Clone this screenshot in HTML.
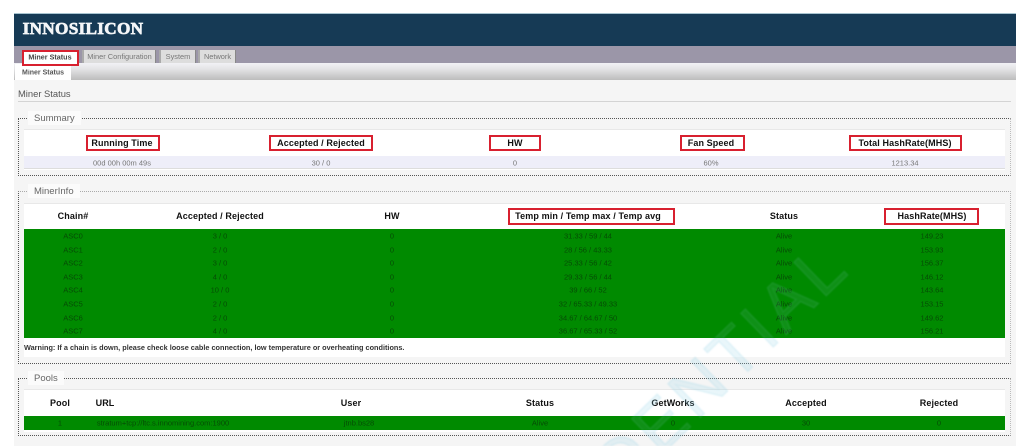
<!DOCTYPE html>
<html><head><meta charset="utf-8">
<style>
html,body{margin:0;padding:0;background:#fff;overflow:hidden;height:446px}
body{width:1024px;position:relative;font-family:"Liberation Sans",sans-serif}
.a{position:absolute}
.t{position:absolute;white-space:nowrap;transform:translate(-50%,-50%);line-height:1;filter:blur(.3px)}
.h{font:bold 9px "Liberation Sans",sans-serif;color:#111;letter-spacing:.12px}
.v{font-size:7.5px;color:#777}
.g{font-size:7.5px;color:#054c05;filter:blur(.3px)}
.r{position:absolute;border:2px solid #d8202f;box-sizing:border-box;background:#fff}
.tab{position:absolute;top:50px;height:13px;background:#ddd;border-left:2px solid #aaa;border-right:1px solid #888;box-sizing:border-box;color:#777;font-size:7.4px;line-height:14px;text-align:center;white-space:nowrap}
.fs{position:absolute;left:18px;width:993px;box-sizing:border-box;border:1px dotted #555;border-right-color:#bbb}
.lg{position:absolute;left:28px;background:#fbfbfb;color:#666;font-size:9.5px;line-height:15px;padding:0 6px;height:14px;overflow:hidden}
.w{position:absolute;left:24px;width:981px;background:#fff;border-top:1px solid #e8e8e8}
.gr{position:absolute;left:24px;width:981px;background:#008a00}
svg{overflow:hidden}
</style></head><body>
<div class="a" style="left:14px;top:13px;width:1002px;height:33px;background:#163a55;border-top:1px solid #a8c4d0;box-sizing:border-box"></div>
<div class="t" style="left:83px;top:29px;font:bold 17.2px 'Liberation Serif',serif;color:#f4f6f8;letter-spacing:.3px;-webkit-text-stroke:.7px #f4f6f8">INNOSILICON</div>
<div class="a" style="left:14px;top:46px;width:1002px;height:17px;background:#9b96a8"></div>
<div class="a" style="left:14px;top:63px;width:1002px;height:17px;background:linear-gradient(#f1f1f5,#e4e4e6 35%,#bcbcbc)"></div>
<div class="a" style="left:14px;top:80px;width:1002px;height:366px;background:#f5f5f5"></div>

<div class="a" style="left:15px;top:64px;width:56px;height:16px;background:#fff"></div>
<div class="r" style="left:22px;top:50px;width:57px;height:16px;background:#fff"></div>
<div class="t" style="left:50px;top:57px;font-size:7.2px;font-weight:bold;color:#444">Miner Status</div>
<div class="tab" style="left:82px;width:74px">Miner Configuration</div>
<div class="tab" style="left:159px;width:37px">System</div>
<div class="tab" style="left:198px;width:38px">Network</div>
<div class="t" style="left:43px;top:73px;font-size:7px;font-weight:bold;color:#555">Miner Status</div>

<div class="a" style="left:18px;top:88px;font-size:9.4px;line-height:12px;color:#555">Miner Status</div>
<div class="a" style="left:18px;top:101px;width:993px;height:1px;background:#d4d4d4"></div>

<div class="fs" style="top:118px;height:58px"></div>
<div class="lg" style="top:111px">Summary</div>
<div class="w" style="top:129px;height:40px"></div>
<div class="a" style="left:24px;top:156px;width:981px;height:13px;background:#eeeef9;border-bottom:1px solid #ddd;box-sizing:border-box"></div>
<div class="r" style="left:86px;top:135px;width:74px;height:16px"></div>
<div class="r" style="left:269px;top:135px;width:104px;height:16px"></div>
<div class="r" style="left:489px;top:135px;width:52px;height:16px"></div>
<div class="r" style="left:680px;top:135px;width:65px;height:16px"></div>
<div class="r" style="left:849px;top:135px;width:113px;height:16px"></div>
<div class="t h" style="left:122px;top:143px">Running Time</div>
<div class="t h" style="left:321px;top:143px">Accepted / Rejected</div>
<div class="t h" style="left:515px;top:143px">HW</div>
<div class="t h" style="left:711px;top:143px">Fan Speed</div>
<div class="t h" style="left:905px;top:143px">Total HashRate(MHS)</div>
<div class="t v" style="left:122px;top:163px">00d 00h 00m 49s</div>
<div class="t v" style="left:321px;top:163px">30 / 0</div>
<div class="t v" style="left:515px;top:163px">0</div>
<div class="t v" style="left:711px;top:163px">60%</div>
<div class="t v" style="left:905px;top:163px">1213.34</div>

<div class="fs" style="top:191px;height:173px;border-top-color:#aaa"></div>
<div class="lg" style="top:184px">MinerInfo</div>
<div class="w" style="top:203px;height:153px"></div>
<div class="r" style="left:508px;top:208px;width:167px;height:17px"></div>
<div class="r" style="left:884px;top:208px;width:95px;height:17px"></div>
<div class="t h" style="left:73px;top:216px">Chain#</div>
<div class="t h" style="left:220px;top:216px">Accepted / Rejected</div>
<div class="t h" style="left:392px;top:216px">HW</div>
<div class="t h" style="left:588px;top:216px">Temp min / Temp max / Temp avg</div>
<div class="t h" style="left:784px;top:216px">Status</div>
<div class="t h" style="left:932px;top:216px">HashRate(MHS)</div>

<div class="a" style="left:24px;top:343px;font-size:7.3px;line-height:10px;font-weight:bold;color:#333;white-space:nowrap">Warning: If a chain is down, please check loose cable connection, low temperature or overheating conditions.</div>

<div class="fs" style="top:378px;height:58px"></div>
<div class="lg" style="top:371px">Pools</div>
<div class="w" style="top:389px;height:42px"></div>
<div class="t h" style="left:60px;top:403px">Pool</div>
<div class="t h" style="left:105px;top:403px">URL</div>
<div class="t h" style="left:351px;top:403px">User</div>
<div class="t h" style="left:540px;top:403px">Status</div>
<div class="t h" style="left:673px;top:403px">GetWorks</div>
<div class="t h" style="left:806px;top:403px">Accepted</div>
<div class="t h" style="left:939px;top:403px">Rejected</div>

<svg class="a" style="left:0;top:0;pointer-events:none;filter:blur(.8px)" width="1024" height="446" viewBox="0 0 1024 446">
<text transform="translate(853,270) rotate(-44)" text-anchor="end" font-family="Liberation Sans, sans-serif" font-size="68" fill="#8fd0e6" fill-opacity=".2" stroke="#8fd0e6" stroke-opacity=".2" stroke-width="1.5" letter-spacing="5">CONFIDENTIAL</text>
</svg>

<div class="gr" style="top:229px;height:109px"></div>
<div class="gr" style="top:416px;height:14px"></div>

<div class="t g" style="left:73px;top:236px">ASC0</div><div class="t g" style="left:220px;top:236px">3 / 0</div><div class="t g" style="left:392px;top:236px">0</div><div class="t g" style="left:588px;top:236px">31.33 / 59 / 44</div><div class="t g" style="left:784px;top:236px">Alive</div><div class="t g" style="left:932px;top:236px">149.23</div>
<div class="t g" style="left:73px;top:249.6px">ASC1</div><div class="t g" style="left:220px;top:249.6px">2 / 0</div><div class="t g" style="left:392px;top:249.6px">0</div><div class="t g" style="left:588px;top:249.6px">28 / 56 / 43.33</div><div class="t g" style="left:784px;top:249.6px">Alive</div><div class="t g" style="left:932px;top:249.6px">153.93</div>
<div class="t g" style="left:73px;top:263.2px">ASC2</div><div class="t g" style="left:220px;top:263.2px">3 / 0</div><div class="t g" style="left:392px;top:263.2px">0</div><div class="t g" style="left:588px;top:263.2px">25.33 / 56 / 42</div><div class="t g" style="left:784px;top:263.2px">Alive</div><div class="t g" style="left:932px;top:263.2px">156.37</div>
<div class="t g" style="left:73px;top:276.8px">ASC3</div><div class="t g" style="left:220px;top:276.8px">4 / 0</div><div class="t g" style="left:392px;top:276.8px">0</div><div class="t g" style="left:588px;top:276.8px">29.33 / 56 / 44</div><div class="t g" style="left:784px;top:276.8px">Alive</div><div class="t g" style="left:932px;top:276.8px">146.12</div>
<div class="t g" style="left:73px;top:290.4px">ASC4</div><div class="t g" style="left:220px;top:290.4px">10 / 0</div><div class="t g" style="left:392px;top:290.4px">0</div><div class="t g" style="left:588px;top:290.4px">39 / 66 / 52</div><div class="t g" style="left:784px;top:290.4px">Alive</div><div class="t g" style="left:932px;top:290.4px">143.64</div>
<div class="t g" style="left:73px;top:304px">ASC5</div><div class="t g" style="left:220px;top:304px">2 / 0</div><div class="t g" style="left:392px;top:304px">0</div><div class="t g" style="left:588px;top:304px">32 / 65.33 / 49.33</div><div class="t g" style="left:784px;top:304px">Alive</div><div class="t g" style="left:932px;top:304px">153.15</div>
<div class="t g" style="left:73px;top:317.6px">ASC6</div><div class="t g" style="left:220px;top:317.6px">2 / 0</div><div class="t g" style="left:392px;top:317.6px">0</div><div class="t g" style="left:588px;top:317.6px">34.67 / 64.67 / 50</div><div class="t g" style="left:784px;top:317.6px">Alive</div><div class="t g" style="left:932px;top:317.6px">149.62</div>
<div class="t g" style="left:73px;top:331.2px">ASC7</div><div class="t g" style="left:220px;top:331.2px">4 / 0</div><div class="t g" style="left:392px;top:331.2px">0</div><div class="t g" style="left:588px;top:331.2px">36.67 / 65.33 / 52</div><div class="t g" style="left:784px;top:331.2px">Alive</div><div class="t g" style="left:932px;top:331.2px">156.21</div>

<div class="t g" style="left:60px;top:423px">1</div>
<div class="t g" style="left:163px;top:423px">stratum+tcp://ltc.s.innomining.com:1900</div>
<div class="t g" style="left:359px;top:423px">jtnb.bs28</div>
<div class="t g" style="left:540px;top:423px">Alive</div>
<div class="t g" style="left:673px;top:423px">0</div>
<div class="t g" style="left:806px;top:423px">30</div>
<div class="t g" style="left:939px;top:423px">0</div>

<svg class="a" style="left:0;top:0;pointer-events:none;filter:blur(.8px)" width="1024" height="446" viewBox="0 0 1024 446">
<defs><clipPath id="c"><rect x="24" y="229" width="981" height="109"/><rect x="24" y="416" width="981" height="14"/></clipPath></defs>
<g clip-path="url(#c)"><text transform="translate(853,270) rotate(-44)" text-anchor="end" font-family="Liberation Sans, sans-serif" font-size="68" fill="#8fd0e6" fill-opacity=".1" stroke="#8fd0e6" stroke-opacity=".1" stroke-width="1.5" letter-spacing="5">CONFIDENTIAL</text></g>
</svg>
</body></html>
